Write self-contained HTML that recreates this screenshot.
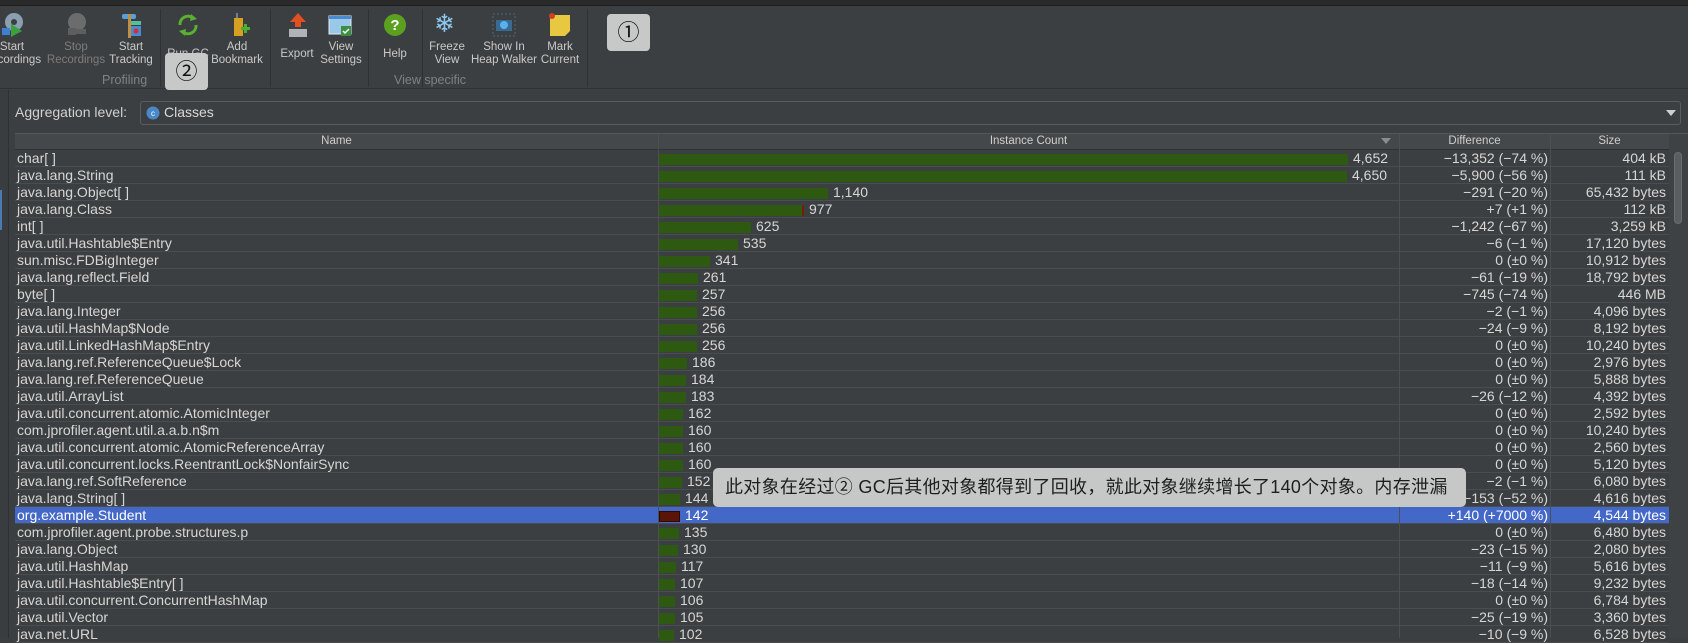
<!DOCTYPE html>
<html><head><meta charset="utf-8">
<style>
*{margin:0;padding:0;box-sizing:border-box}
body{width:1688px;height:638px;overflow:hidden;background:#3c3f41;font-family:"Liberation Sans","Noto Sans CJK SC",sans-serif;position:relative;color:#d4d4d4}
.abs{position:absolute}
.title{left:0;top:0;width:1688px;height:6px;background:#2a2a2a;border-bottom:1px solid #1e1e1e}
.tb{left:0;top:7px;width:1688px;height:82px;background:#3c3f41;border-bottom:1px solid #2f3133}
.lbl{position:absolute;font-size:11.5px;color:#c9c9c9;text-align:center;line-height:13px;width:80px}
.lbl.dis{color:#7c7c7c}
.grp{position:absolute;font-size:12.5px;color:#7f8284;top:73px}
.sep{position:absolute;top:9px;width:1px;height:78px;background:#2f3133}
.ico{position:absolute}
.badge{position:absolute;background:#c7c8c8;border-radius:4px;color:#111;font-size:22px;text-align:center}
.left{left:0;top:90px;width:9px;height:548px;background:#3a3d3f;border-right:1px solid #2e3032}
.agg{left:15px;top:104px;font-size:14px;color:#d0d0d0}
.combo{left:140px;top:101px;width:1541px;height:24px;border:1px solid #5a5d5f;border-radius:3px;background:#3c3f41}
.tbl{left:15px;top:133px;width:1673px;height:505px;background:#3c3f41;border-top:1px solid #55585a}
.hdr{left:15px;top:134px;width:1654px;height:16px;background:#45484a;border-bottom:1px solid #2f3133;font-size:11.5px;color:#cfcfcf}
.hdr div{position:absolute;top:1px;text-align:center}
.row{position:absolute;left:15px;width:1654px;height:17px;border-bottom:1px solid #4a4d4f;font-size:14px;line-height:16px;color:#d6d6d6}
.row .n{position:absolute;left:2px;top:0}
.row .b{position:absolute;left:644px;top:4px;height:11px;background:#2d5a10}
.row .c{position:absolute;top:0}
.row .d{position:absolute;right:121px;top:0;text-align:right}
.row .s{position:absolute;right:3px;top:0;text-align:right}
.row.sel{background:#4468c8;color:#fff}
.vl{position:absolute;top:134px;width:1px;height:504px;background:#4d5052}
.sb{left:1669px;top:134px;width:19px;height:504px;background:#3f4244}
.thumb{left:1674px;top:152px;width:8px;height:72px;border-radius:4px;background:#5b5e60;border:1px solid #6a6d6f}
.tip{left:713px;top:468px;width:753px;height:39px;background:#c6c7c7;border-radius:5px;color:#1e1e1e;font-size:18px;letter-spacing:0.3px;line-height:39px;padding-left:12px;white-space:nowrap}
</style></head><body>
<div class="abs title"></div>
<div class="abs tb"></div>
<svg class="ico" style="left:0;top:12px" width="26" height="26"><circle cx="14" cy="10" r="9" fill="#8aa0b0"/><circle cx="14" cy="10" r="3" fill="#3c3f41"/><rect x="2" y="16" width="8" height="7" fill="#3f7fd0"/><polygon points="11,12 22,19 11,25" fill="#3aa040"/></svg>
<svg class="ico" style="left:64px;top:12px" width="26" height="26"><circle cx="13" cy="10" r="9" fill="#6a6c6e"/><rect x="4" y="16" width="8" height="7" fill="#5c5e60"/><rect x="12" y="17" width="10" height="5" fill="#5c5e60"/></svg>
<svg class="ico" style="left:119px;top:12px" width="26" height="26"><rect x="3" y="2" width="14" height="5" rx="2" fill="#5aa0d8"/><rect x="9" y="2" width="3" height="24" fill="#c09040"/><rect x="12" y="9" width="10" height="4" fill="#50c0a0"/><rect x="12" y="14" width="10" height="10" fill="#4a8ad0"/><circle cx="17" cy="19" r="2.5" fill="#d03030"/></svg>
<svg class="ico" style="left:175px;top:12px" width="26" height="26"><path d="M5 13 A8 8 0 0 1 18 6" stroke="#5cb030" stroke-width="3" fill="none"/><path d="M21 13 A8 8 0 0 1 8 20" stroke="#5cb030" stroke-width="3" fill="none"/><polygon points="16,2 22,7 15,9" fill="#5cb030"/><polygon points="10,24 4,19 11,17" fill="#5cb030"/></svg>
<svg class="ico" style="left:227px;top:12px" width="26" height="26"><rect x="7" y="6" width="9" height="18" fill="#d8a020"/><path d="M10 6 V1" stroke="#708090" stroke-width="2"/><rect x="14" y="15" width="9" height="3" fill="#4ab030"/><rect x="17" y="12" width="3" height="9" fill="#4ab030"/></svg>
<svg class="ico" style="left:286px;top:12px" width="24" height="26"><polygon points="12,1 20,10 15,10 15,15 9,15 9,10 4,10" fill="#e05020"/><rect x="3" y="17" width="18" height="8" fill="#b0b4b8"/></svg>
<svg class="ico" style="left:328px;top:15px" width="26" height="24"><rect x="1" y="1" width="22" height="18" fill="#9ac8e8" stroke="#dfeef8"/><rect x="1" y="1" width="22" height="3" fill="#4a8ad0"/><rect x="13" y="11" width="10" height="10" fill="#3a9040"/><path d="M15 16 l2 2 l4 -4" stroke="#fff" stroke-width="1.5" fill="none"/></svg>
<svg class="ico" style="left:383px;top:13px" width="24" height="24"><circle cx="12" cy="12" r="11" fill="#5ca020"/><text x="12" y="17" font-size="15" font-weight="bold" fill="#fff" text-anchor="middle" font-family="Liberation Sans">?</text></svg>
<div class="ico" style="left:434px;top:9px;font-size:25px;color:#8cc8f0">❄</div>
<svg class="ico" style="left:492px;top:13px" width="24" height="24"><rect x="1" y="1" width="22" height="22" fill="none" stroke="#4a6a80" stroke-dasharray="2 2"/><rect x="4" y="7" width="16" height="11" fill="#3a6a90"/><circle cx="12" cy="12" r="4" fill="#5ab0f0"/></svg>
<svg class="ico" style="left:547px;top:12px" width="26" height="26"><polygon points="3,3 23,3 23,19 18,24 3,24" fill="#e8c840"/><circle cx="5" cy="4" r="3" fill="#d04020"/></svg>
<div class="lbl" style="left:-28px;top:41px">Start<br>Recordings</div>
<div class="lbl dis" style="left:36px;top:41px">Stop<br>Recordings</div>
<div class="lbl" style="left:91px;top:41px">Start<br>Tracking</div>
<div class="lbl" style="left:148px;top:48px">Run GC</div>
<div class="lbl" style="left:197px;top:41px">Add<br>Bookmark</div>
<div class="lbl" style="left:257px;top:48px">Export</div>
<div class="lbl" style="left:301px;top:41px">View<br>Settings</div>
<div class="lbl" style="left:355px;top:48px">Help</div>
<div class="lbl" style="left:407px;top:41px">Freeze<br>View</div>
<div class="lbl" style="left:464px;top:41px">Show In<br>Heap Walker</div>
<div class="lbl" style="left:520px;top:41px">Mark<br>Current</div>
<div class="grp" style="left:102px">Profiling</div>
<div class="grp" style="left:394px">View specific</div>
<div class="sep" style="left:160px"></div>
<div class="sep" style="left:270px"></div>
<div class="sep" style="left:368px"></div>
<div class="sep" style="left:422px"></div>
<div class="sep" style="left:587px"></div>
<div class="badge" style="left:607px;top:14px;width:43px;height:37px;line-height:37px">①</div>
<div class="badge" style="left:165px;top:53px;width:43px;height:37px;line-height:37px">②</div>

<div class="abs left"></div>
<div class="abs" style="left:0;top:190px;width:2px;height:40px;background:#4a7ab0"></div>
<div class="abs agg">Aggregation level:</div>
<div class="abs combo"></div>
<svg class="abs" style="left:146px;top:106px" width="14" height="14"><circle cx="7" cy="7" r="6.5" fill="#4a88c8"/><text x="7" y="10" font-size="8" fill="#fff" text-anchor="middle" font-family="Liberation Sans">c</text></svg>
<div class="abs" style="left:164px;top:104px;font-size:14px;color:#d8d8d8">Classes</div>
<svg class="abs" style="left:1666px;top:109px" width="10" height="8"><polygon points="0,1 10,1 5,7" fill="#cfcfcf"/></svg>

<div class="abs tbl"></div>
<div class="abs hdr">
<div style="left:0;width:643px">Name</div>
<div style="left:643px;width:741px">Instance Count</div>
<div style="left:1384px;width:151px">Difference</div>
<div style="left:1535px;width:119px">Size</div>
<svg style="position:absolute;left:1366px;top:4px" width="10" height="6"><polygon points="0,0 10,0 5,6" fill="#8a8d8f"/></svg>
</div>
<div class="abs sb"></div>
<div class="abs thumb"></div>

<div id="rows">
<div class="row" style="top:150px"><span class="n">char[ ]</span><span class="b" style="width:689px"></span><span class="c" style="left:1338px">4,652</span><span class="d">−13,352 (−74 %)</span><span class="s">404 kB</span></div>
<div class="row" style="top:167px"><span class="n">java.lang.String</span><span class="b" style="width:688px"></span><span class="c" style="left:1337px">4,650</span><span class="d">−5,900 (−56 %)</span><span class="s">111 kB</span></div>
<div class="row" style="top:184px"><span class="n">java.lang.Object[ ]</span><span class="b" style="width:169px"></span><span class="c" style="left:818px">1,140</span><span class="d">−291 (−20 %)</span><span class="s">65,432 bytes</span></div>
<div class="row" style="top:201px"><span class="n">java.lang.Class</span><span class="b" style="width:145px;border-right:2px solid #7a1a0a"></span><span class="c" style="left:794px">977</span><span class="d">+7 (+1 %)</span><span class="s">112 kB</span></div>
<div class="row" style="top:218px"><span class="n">int[ ]</span><span class="b" style="width:92px"></span><span class="c" style="left:741px">625</span><span class="d">−1,242 (−67 %)</span><span class="s">3,259 kB</span></div>
<div class="row" style="top:235px"><span class="n">java.util.Hashtable$Entry</span><span class="b" style="width:79px"></span><span class="c" style="left:728px">535</span><span class="d">−6 (−1 %)</span><span class="s">17,120 bytes</span></div>
<div class="row" style="top:252px"><span class="n">sun.misc.FDBigInteger</span><span class="b" style="width:51px"></span><span class="c" style="left:700px">341</span><span class="d">0 (±0 %)</span><span class="s">10,912 bytes</span></div>
<div class="row" style="top:269px"><span class="n">java.lang.reflect.Field</span><span class="b" style="width:39px"></span><span class="c" style="left:688px">261</span><span class="d">−61 (−19 %)</span><span class="s">18,792 bytes</span></div>
<div class="row" style="top:286px"><span class="n">byte[ ]</span><span class="b" style="width:38px"></span><span class="c" style="left:687px">257</span><span class="d">−745 (−74 %)</span><span class="s">446 MB</span></div>
<div class="row" style="top:303px"><span class="n">java.lang.Integer</span><span class="b" style="width:38px"></span><span class="c" style="left:687px">256</span><span class="d">−2 (−1 %)</span><span class="s">4,096 bytes</span></div>
<div class="row" style="top:320px"><span class="n">java.util.HashMap$Node</span><span class="b" style="width:38px"></span><span class="c" style="left:687px">256</span><span class="d">−24 (−9 %)</span><span class="s">8,192 bytes</span></div>
<div class="row" style="top:337px"><span class="n">java.util.LinkedHashMap$Entry</span><span class="b" style="width:38px"></span><span class="c" style="left:687px">256</span><span class="d">0 (±0 %)</span><span class="s">10,240 bytes</span></div>
<div class="row" style="top:354px"><span class="n">java.lang.ref.ReferenceQueue$Lock</span><span class="b" style="width:28px"></span><span class="c" style="left:677px">186</span><span class="d">0 (±0 %)</span><span class="s">2,976 bytes</span></div>
<div class="row" style="top:371px"><span class="n">java.lang.ref.ReferenceQueue</span><span class="b" style="width:27px"></span><span class="c" style="left:676px">184</span><span class="d">0 (±0 %)</span><span class="s">5,888 bytes</span></div>
<div class="row" style="top:388px"><span class="n">java.util.ArrayList</span><span class="b" style="width:27px"></span><span class="c" style="left:676px">183</span><span class="d">−26 (−12 %)</span><span class="s">4,392 bytes</span></div>
<div class="row" style="top:405px"><span class="n">java.util.concurrent.atomic.AtomicInteger</span><span class="b" style="width:24px"></span><span class="c" style="left:673px">162</span><span class="d">0 (±0 %)</span><span class="s">2,592 bytes</span></div>
<div class="row" style="top:422px"><span class="n">com.jprofiler.agent.util.a.a.b.n$m</span><span class="b" style="width:24px"></span><span class="c" style="left:673px">160</span><span class="d">0 (±0 %)</span><span class="s">10,240 bytes</span></div>
<div class="row" style="top:439px"><span class="n">java.util.concurrent.atomic.AtomicReferenceArray</span><span class="b" style="width:24px"></span><span class="c" style="left:673px">160</span><span class="d">0 (±0 %)</span><span class="s">2,560 bytes</span></div>
<div class="row" style="top:456px"><span class="n">java.util.concurrent.locks.ReentrantLock$NonfairSync</span><span class="b" style="width:24px"></span><span class="c" style="left:673px">160</span><span class="d">0 (±0 %)</span><span class="s">5,120 bytes</span></div>
<div class="row" style="top:473px"><span class="n">java.lang.ref.SoftReference</span><span class="b" style="width:23px"></span><span class="c" style="left:672px">152</span><span class="d">−2 (−1 %)</span><span class="s">6,080 bytes</span></div>
<div class="row" style="top:490px"><span class="n">java.lang.String[ ]</span><span class="b" style="width:21px"></span><span class="c" style="left:670px">144</span><span class="d">−153 (−52 %)</span><span class="s">4,616 bytes</span></div>
<div class="row sel" style="top:507px"><span class="n">org.example.Student</span><span class="b" style="width:21px;background:#5a1408;border:1px solid #2a0a04"></span><span class="c" style="left:670px">142</span><span class="d">+140 (+7000 %)</span><span class="s">4,544 bytes</span></div>
<div class="row" style="top:524px"><span class="n">com.jprofiler.agent.probe.structures.p</span><span class="b" style="width:20px"></span><span class="c" style="left:669px">135</span><span class="d">0 (±0 %)</span><span class="s">6,480 bytes</span></div>
<div class="row" style="top:541px"><span class="n">java.lang.Object</span><span class="b" style="width:19px"></span><span class="c" style="left:668px">130</span><span class="d">−23 (−15 %)</span><span class="s">2,080 bytes</span></div>
<div class="row" style="top:558px"><span class="n">java.util.HashMap</span><span class="b" style="width:17px"></span><span class="c" style="left:666px">117</span><span class="d">−11 (−9 %)</span><span class="s">5,616 bytes</span></div>
<div class="row" style="top:575px"><span class="n">java.util.Hashtable$Entry[ ]</span><span class="b" style="width:16px"></span><span class="c" style="left:665px">107</span><span class="d">−18 (−14 %)</span><span class="s">9,232 bytes</span></div>
<div class="row" style="top:592px"><span class="n">java.util.concurrent.ConcurrentHashMap</span><span class="b" style="width:16px"></span><span class="c" style="left:665px">106</span><span class="d">0 (±0 %)</span><span class="s">6,784 bytes</span></div>
<div class="row" style="top:609px"><span class="n">java.util.Vector</span><span class="b" style="width:16px"></span><span class="c" style="left:665px">105</span><span class="d">−25 (−19 %)</span><span class="s">3,360 bytes</span></div>
<div class="row" style="top:626px"><span class="n">java.net.URL</span><span class="b" style="width:15px"></span><span class="c" style="left:664px">102</span><span class="d">−10 (−9 %)</span><span class="s">6,528 bytes</span></div>
</div>
<div class="vl" style="left:658px"></div>
<div class="vl" style="left:1399px"></div>
<div class="vl" style="left:1550px"></div>

<div class="abs tip">此对象在经过② GC后其他对象都得到了回收，就此对象继续增长了140个对象。内存泄漏</div>
</body></html>
